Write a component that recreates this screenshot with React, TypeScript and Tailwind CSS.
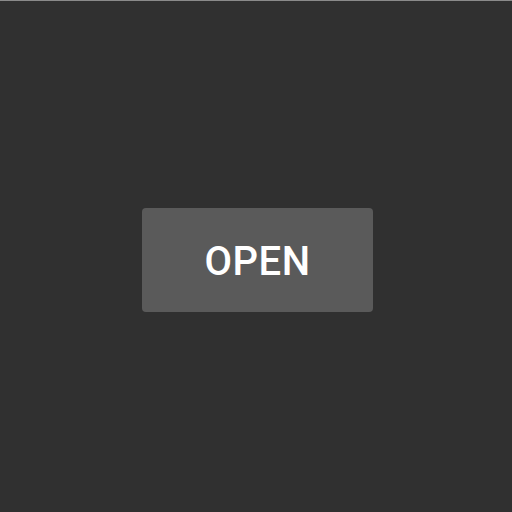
export default function App() {
  return (
    <div className="w-[512px] h-[512px] bg-[#303030] border-t border-[#8a8a8a] flex items-center justify-center">
      <button
        className="w-[231px] h-[104px] rounded-[4px] bg-[#5a5a5a] text-white text-[40px] font-medium tracking-[0.5px] flex items-center justify-center pt-[4px] mt-[7px] ml-[3px]"
        style={{ fontFamily: 'Roboto, "Noto Sans", sans-serif' }}
      >
        OPEN
      </button>
    </div>
  )
}
